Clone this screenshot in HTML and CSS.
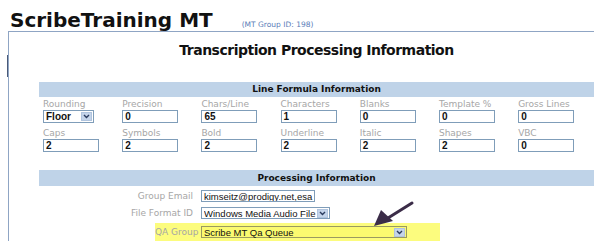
FILE: index.html
```html
<!DOCTYPE html>
<html>
<head>
<meta charset="utf-8">
<link rel="stylesheet" href="styles.css">
</head>
<body>
<div class="title-row">
  <span class="site-title">ScribeTraining MT</span>
  <span class="group-id">(MT Group ID: 198)</span>
</div>
<div class="panel">
  <span class="edge-mark"></span>
  <h2 class="page-heading">Transcription Processing Information</h2>
  <div class="section-bar">Line Formula Information</div>
  <div class="formula-grid">
    <div class="field"><span class="label">Rounding</span><span class="select small"><span class="sel-text bold">Floor</span><span class="sel-btn"><svg width="7" height="5" viewBox="0 0 7 5"><path d="M1 1 L3.5 3.5 L6 1" fill="none" stroke="#2a3b5e" stroke-width="1.4"/></svg></span></span></div>
    <div class="field"><span class="label">Precision</span><span class="input">0</span></div>
    <div class="field"><span class="label">Chars/Line</span><span class="input">65</span></div>
    <div class="field"><span class="label">Characters</span><span class="input">1</span></div>
    <div class="field"><span class="label">Blanks</span><span class="input">0</span></div>
    <div class="field"><span class="label">Template %</span><span class="input">0</span></div>
    <div class="field"><span class="label">Gross Lines</span><span class="input">0</span></div>
    <div class="field"><span class="label">Caps</span><span class="input">2</span></div>
    <div class="field"><span class="label">Symbols</span><span class="input">2</span></div>
    <div class="field"><span class="label">Bold</span><span class="input">2</span></div>
    <div class="field"><span class="label">Underline</span><span class="input">2</span></div>
    <div class="field"><span class="label">Italic</span><span class="input">2</span></div>
    <div class="field"><span class="label">Shapes</span><span class="input">2</span></div>
    <div class="field"><span class="label">VBC</span><span class="input">0</span></div>
  </div>
  <div class="section-bar second">Processing Information</div>
  <div class="proc-rows">
    <div class="proc-row"><span class="proc-label">Group Email</span><span class="input email">kimseitz@prodigy.net,esa</span></div>
    <div class="proc-row tall"><span class="proc-label">File Format ID</span><span class="select format"><span class="sel-text">Windows Media Audio File</span><span class="sel-btn"><svg width="7" height="5" viewBox="0 0 7 5"><path d="M1 1 L3.5 3.5 L6 1" fill="none" stroke="#2a3b5e" stroke-width="1.4"/></svg></span></span></div>
    <div class="proc-row highlight"><span class="proc-label">QA Group</span><span class="select qa"><span class="sel-text">Scribe MT Qa Queue</span><span class="sel-btn"><svg width="7" height="5" viewBox="0 0 7 5"><path d="M1 1 L3.5 3.5 L6 1" fill="none" stroke="#2a3b5e" stroke-width="1.4"/></svg></span></span></div>
  </div>
  <svg class="pointer-arrow" width="44" height="30" viewBox="0 0 44 30">
    <path d="M39 3 L15 18" stroke="#3b2c48" stroke-width="3" stroke-linecap="round" fill="none"/>
    <path d="M1 26 L8 10 L20 21 Z" fill="#3b2c48"/>
  </svg>
</div>
</body>
</html>
```
FILE: styles.css
```css
* { box-sizing: border-box; }
body {
  margin: 0;
  background: #fff;
  font-family: "DejaVu Sans", Verdana, sans-serif;
  width: 605px;
  height: 249px;
  overflow: hidden;
}
.title-row {
  display: flex;
  align-items: baseline;
  padding-left: 10px;
  height: 31px;
  padding-top: 8px;
}
.site-title {
  font-size: 20px;
  font-weight: bold;
  color: #111;
}
.group-id {
  font-size: 7.5px;
  color: #5a7db8;
  margin-left: 29px;
}
.panel {
  position: relative;
  margin-left: 8px;
  width: 586px;
  height: 210px;
  border-top: 1px solid #8fa5c4;
  border-left: 1px solid #8fa5c4;
}
.edge-mark {
  position: absolute;
  left: -2px;
  top: 23px;
  width: 1px;
  height: 22px;
  background: #4a5a78;
}
.page-heading {
  margin: 0 0 0 30px;
  padding-top: 10px;
  height: 50px;
  text-align: center;
  font-size: 14px;
  font-weight: bold;
  color: #111;
  letter-spacing: -0.5px;
}
.section-bar {
  margin-left: 30px;
  height: 15px;
  background: #bfd3e8;
  font-size: 9px;
  font-weight: bold;
  color: #111;
  text-align: center;
  line-height: 15px;
}
.section-bar.second {
  margin-top: 18px;
  height: 16px;
  line-height: 16px;
}
.formula-grid {
  display: grid;
  grid-template-columns: repeat(7, 79.2px);
  row-gap: 5px;
  padding-left: 34px;
  padding-top: 2px;
}
.field {
  display: flex;
  flex-direction: column;
}
.label {
  font-size: 9px;
  color: #a6a6a6;
  line-height: 10px;
  height: 10px;
  margin-bottom: 1px;
}
.input {
  width: 56px;
  height: 13px;
  border: 1px solid #7f9db9;
  background: #fff;
  font-family: "Liberation Sans", Arial, sans-serif;
  font-size: 10px;
  font-weight: bold;
  line-height: 11px;
  padding-left: 2px;
  color: #111;
}
.select {
  display: flex;
  align-items: center;
  height: 12px;
  border: 1px solid #7f9db9;
  background: #fff;
  font-family: "Liberation Sans", Arial, sans-serif;
  font-size: 9.5px;
  color: #111;
  padding: 0 1px 0 2px;
}
.select.small { width: 51px; height: 13px; font-size: 10px; }
.sel-text { flex: 1; white-space: nowrap; overflow: hidden; line-height: 11px; }
.sel-text.bold { font-weight: bold; }
.sel-btn {
  width: 11px;
  height: 9px;
  flex: none;
  background: #c4d4ea;
  border: 1px solid #b0c4de;
  display: flex;
  align-items: center;
  justify-content: center;
}
.proc-rows {
  display: flex;
  flex-direction: column;
  padding-top: 1px;
}
.proc-row {
  display: flex;
  align-items: center;
  height: 17px;
}
.proc-row.tall { height: 18px; }
.proc-label {
  width: 192px;
  flex: none;
  white-space: nowrap;
  text-align: right;
  padding-right: 8px;
  font-size: 9px;
  color: #a6a6a6;
}
.input.email {
  width: 114px;
  height: 12px;
  font-weight: normal;
  font-size: 9.5px;
  white-space: nowrap;
  overflow: hidden;
}
.select.format { width: 129px; height: 12px; }
.select.qa { width: 206px; height: 12px; background: #fbfa70; border-color: #9a9a60; }
.proc-row.highlight {
  height: 18px;
  margin-top: 1px;
  margin-left: 146px;
  width: 285px;
  background: #fcfc7e;
}
.proc-row.highlight .proc-label { width: 46px; }
.pointer-arrow {
  position: absolute;
  left: 364px;
  top: 168px;
}
```
